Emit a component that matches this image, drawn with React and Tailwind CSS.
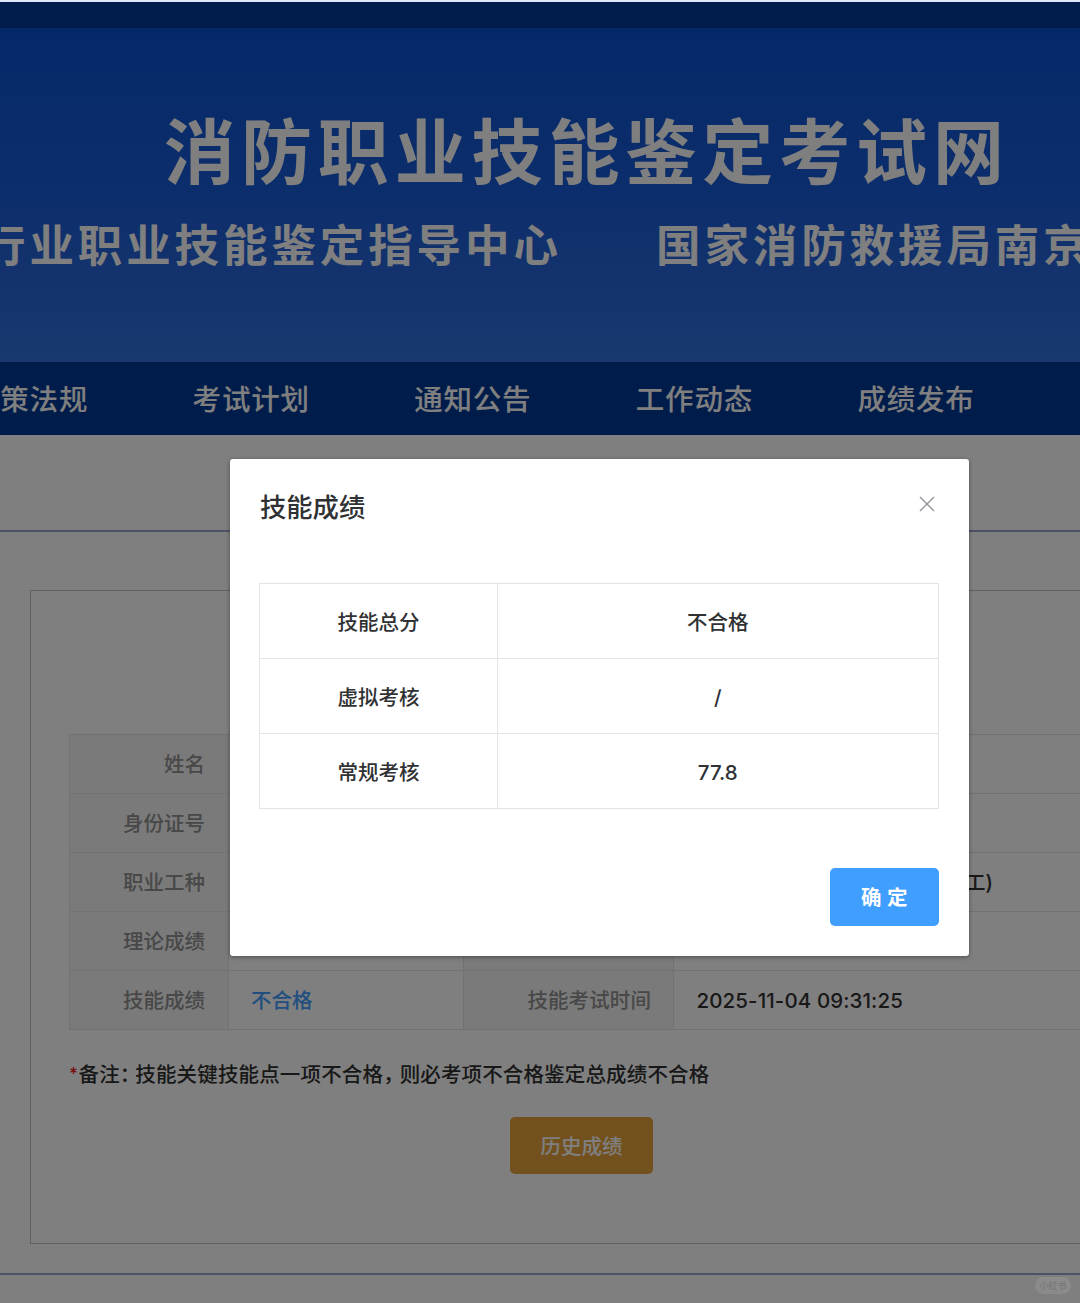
import clsx from 'clsx';

const navItems = ['政策法规', '考试计划', '通知公告', '工作动态', '成绩发布'];

const infoRows = [
  { label: '姓名', value: '', label2: '', value2: '' },
  { label: '身份证号', value: '', label2: '', value2: '' },
  { label: '职业工种', value: '', label2: '', value2: '工)', wide: true },
  { label: '理论成绩', value: '', label2: '', value2: '' },
  { label: '技能成绩', value: '不合格', label2: '技能考试时间', value2: '2025-11-04 09:31:25' },
];

const scores = [
  { name: '技能总分', result: '不合格' },
  { name: '虚拟考核', result: '/' },
  { name: '常规考核', result: '77.8' },
];

const Banner = () => (
  <div className="h-[334px] overflow-hidden bg-linear-to-b from-[#0852d2] via-[#1a5cd8] to-[#3470e0] whitespace-nowrap text-white">
    <h1 className="ml-[164px] mt-[72px] text-[71px] leading-[104px] font-bold tracking-[5.9px]">
      消防职业技能鉴定考试网
    </h1>
    <div className="-ml-[19px] mt-[10px] flex text-[44.5px] leading-[64px] font-bold tracking-[3.9px]">
      <span className="w-[675px] shrink-0">行业职业技能鉴定指导中心</span>
      <span>国家消防救援局南京</span>
    </div>
  </div>
);

const Nav = () => (
  <nav className="-ml-[29px] flex h-[73px] items-center bg-[#003894] pt-[2px]">
    {navItems.map((item) => (
      <a key={item} className="w-[221.6px] shrink-0 text-[28.5px] leading-[40px] font-medium tracking-[0.8px] text-white">
        {item}
      </a>
    ))}
  </nav>
);

const InfoTable = () => (
  <div className="w-[1080px] border-t border-l border-[#e2e4e8]">
    {infoRows.map((row) => (
      <div
        key={row.label}
        className="grid h-[59.1px] grid-cols-[159px_235px_210px_1fr] border-b border-[#e2e4e8] *:flex *:items-center *:border-r *:border-[#e2e4e8] *:pt-[2px]"
      >
        <div className="justify-end bg-[#f5f5f5] pr-[23px] text-[#909090]">{row.label}</div>
        <div className="pl-[22px] text-[#409eff]">{row.value}</div>
        <div className="justify-end bg-[#f5f5f5] pr-[22px] text-[#909090] tracking-[0.1px]">{row.label2}</div>
        <div className={clsx('text-[#303030]', row.wide ? 'pl-[291px]' : 'pl-[22.5px] tracking-[0.1px]')}>{row.value2}</div>
      </div>
    ))}
  </div>
);

const ScoreDialog = () => (
  <div className="absolute top-[459px] left-[230px] flex h-[497px] w-[738.5px] flex-col rounded-[3px] bg-white pr-[30px] pl-[29px] shadow-[0_1px_4px_rgba(0,0,0,0.4)]">
    <div className="flex items-center justify-between pt-[31px] pr-[4px]">
      <h2 className="pl-[1px] text-[26.3px] leading-[36px] text-[#303133]">技能成绩</h2>
      <svg viewBox="0 0 16 16" className="mb-[8px] size-4" fill="none" stroke="#909399" strokeWidth="1.4">
        <path d="M1 1 15 15M15 1 1 15" />
      </svg>
    </div>
    <div className="mt-[57px] border-t border-l border-[#e4e4e4] text-[#303133]">
      {scores.map((score) => (
        <div
          key={score.name}
          className="grid h-[75px] grid-cols-[238px_1fr] border-b border-[#e4e4e4] *:flex *:items-center *:justify-center *:border-r *:border-[#e4e4e4] *:pt-[4px]"
        >
          <div>{score.name}</div>
          <div>{score.result}</div>
        </div>
      ))}
    </div>
    <button className="mt-[59px] h-[58px] w-[109px] self-end rounded-[5px] bg-[#409eff] pt-[3px] pl-[1px] font-bold tracking-[0.3px] text-white">
      确 定
    </button>
  </div>
);

export default function App() {
  return (
    <div className="relative h-[1303px] w-[1080px] overflow-hidden bg-white font-['Inter','Noto_Sans_CJK_SC',sans-serif] text-[20.5px] font-medium">
      <div className="h-[2px] bg-[#dfe8f8]" />
      <div className="h-[26px] bg-[#003894]" />
      <Banner />
      <Nav />
      <div className="h-[97px] border-b-2 border-[#9aa6cc]" />
      <div className="mt-[58px] ml-[30px] h-[654px] w-[1200px] border border-[#bcc4c8] pl-[38px]">
        <div className="pt-[143px]">
          <InfoTable />
        </div>
        <p className="mt-[30px] leading-[30px] tracking-[0.15px] text-[#303030]">
          <span className="inline-block w-[9.5px] align-[2px] text-[17px] leading-none text-[#f02020]">*</span>
          备注<span className="tracking-[-5px]">：</span>技能关键技能点一项不合格<span className="tracking-[-4px]">，</span>则必考项不合格鉴定总成绩不合格
        </p>
        <button className="mt-[27px] ml-[441px] block h-[57px] w-[143px] rounded-[5px] bg-[#e6a23c] pt-[2px] text-white">
          历史成绩
        </button>
      </div>
      <div className="mt-[29px] h-[2px] bg-[#9aa6cc]" />

      <div className="absolute inset-x-0 top-[2px] bottom-0 bg-black/50" />
      <ScoreDialog />
      <div className="absolute top-[1277px] left-[1035px] h-[17px] w-[36px] rounded-full bg-[#8b8b8b] text-center text-[9px] leading-[17px] text-[#777777]">
        小红书
      </div>
    </div>
  );
}
